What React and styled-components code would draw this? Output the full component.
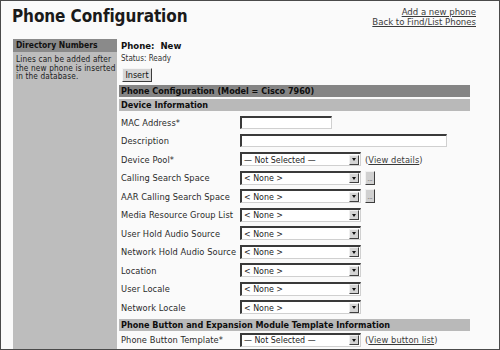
import React from "react";
import styled, { createGlobalStyle } from "styled-components";

const FONT = '"DejaVu Sans Condensed", "DejaVu Sans", Verdana, sans-serif';

const Global = createGlobalStyle`
  html, body { margin: 0; padding: 0; background: #fff; }
  body { font-family: ${FONT}; font-stretch: semi-condensed; color: #111; }
  * { box-sizing: border-box; }
`;

const Frame = styled.div`
  width: 500px;
  height: 350px;
  border: 1px solid #4a4a4a;
  background: #fafafa;
  display: flex;
  flex-direction: column;
  overflow: hidden;
`;

const Header = styled.div`
  height: 38px;
  display: flex;
  justify-content: space-between;
  align-items: flex-start;
  padding: 3px 23px 0 11px;
`;

const Title = styled.h1`
  margin: 0;
  font-size: 17px;
  font-weight: bold;
  font-stretch: semi-condensed;
  letter-spacing: -0.1px;
  line-height: 24px;
  color: #1a1a1a;
`;

const Links = styled.div`
  display: flex;
  flex-direction: column;
  align-items: flex-end;
  padding-top: 3px;
`;

const TopLink = styled.a`
  font-size: 9.5px;
  line-height: 10px;
  color: #3a3a3a;
  text-decoration: underline;
`;

const Body = styled.div`
  flex: 1;
  display: flex;
  gap: 2px;
  padding-left: 12px;
  min-height: 0;
`;

const Sidebar = styled.div`
  width: 104px;
  background: #bdbdbd;
  display: flex;
  flex-direction: column;
`;

const SideHead = styled.div`
  height: 13px;
  background: #8a8a8a;
  font-size: 8.5px;
  font-weight: bold;
  line-height: 13px;
  padding-left: 3px;
  color: #111;
`;

const SideText = styled.p`
  margin: 0;
  padding: 3px 0 0 3px;
  font-size: 8.2px;
  letter-spacing: 0.15px;
  line-height: 8.7px;
  white-space: nowrap;
  color: #1a1a1a;
`;

const Main = styled.div`
  width: 351px;
  display: flex;
  flex-direction: column;
`;

const PhoneLine = styled.div`
  margin-top: 1px;
  padding-left: 2px;
  font-size: 9.5px;
  font-weight: bold;
  line-height: 11px;
  white-space: pre;
`;

const Status = styled.div`
  margin-top: 3px;
  padding-left: 2px;
  font-size: 8px;
  line-height: 10px;
  color: #333;
`;

const InsertButton = styled.button`
  align-self: flex-start;
  margin: 4px 0 0 3px;
  height: 14px;
  width: 30px;
  padding: 0;
  font-family: ${FONT};
  font-stretch: semi-condensed;
  font-size: 9px;
  line-height: 10px;
  background: #d6d6d6;
  color: #111;
  border: 1px solid;
  border-color: #f4f4f4 #3c3c3c #3c3c3c #f4f4f4;
`;

const Bar = styled.div`
  height: 12px;
  margin-top: ${(p) => p.$mt || 2}px;
  background: ${(p) => (p.$dark ? "#858585" : "#b9b9b9")};
  font-size: 9px;
  font-weight: bold;
  line-height: 12px;
  padding-left: 2px;
  color: #0d0d0d;
  white-space: nowrap;
`;

const Rows = styled.div`
  margin-top: ${(p) => p.$mt || 0}px;
  display: flex;
  flex-direction: column;
`;

const Row = styled.div`
  height: 18.5px;
  display: grid;
  grid-template-columns: 121px 1fr;
  align-items: center;
`;

const Label = styled.div`
  padding-left: 2px;
  font-size: 9.2px;
  letter-spacing: 0.08px;
  color: #2a2a2a;
  white-space: nowrap;
`;

const Field = styled.div`
  display: flex;
  align-items: center;
  gap: 4px;
`;

const TextInput = styled.div`
  width: ${(p) => p.$w}px;
  height: 13px;
  background: #fff;
  border-style: solid;
  border-width: 2px 1px 1px 2px;
  border-color: #3a3a3a #d0d0d0 #d0d0d0 #3a3a3a;
`;

const Select = styled.div`
  width: 121px;
  height: 14px;
  background: #fff;
  border-style: solid;
  border-width: 2px 1px 1px 2px;
  border-color: #3a3a3a #d0d0d0 #d0d0d0 #3a3a3a;
  display: flex;
  align-items: center;
  justify-content: space-between;
`;

const SelectText = styled.span`
  font-size: 8.8px;
  line-height: 10px;
  padding-left: 2px;
  color: #222;
  white-space: nowrap;
`;

const Arrow = styled.span`
  width: 10px;
  height: 10px;
  margin-right: 1px;
  background: #d4d4d4;
  border: 1px solid;
  border-color: #f0f0f0 #404040 #404040 #f0f0f0;
  display: flex;
  align-items: center;
  justify-content: center;
  &::after {
    content: "";
    border-left: 2.5px solid transparent;
    border-right: 2.5px solid transparent;
    border-top: 3px solid #111;
  }
`;

const DotsButton = styled.span`
  width: 10px;
  height: 14px;
  background: #d0d0d0;
  border: 1px solid;
  border-color: #f0f0f0 #3c3c3c #3c3c3c #f0f0f0;
  font-size: 6px;
  line-height: 14px;
  text-align: center;
  color: #333;
  overflow: hidden;
`;

const ParenLink = styled.span`
  font-size: 9.2px;
  letter-spacing: 0.1px;
  color: #3a3a3a;
  a {
    color: #3a3a3a;
    text-decoration: underline;
  }
`;

const deviceRows = [
  { label: "MAC Address*", input: 92 },
  { label: "Description", input: 207 },
  { label: "Device Pool*", select: "\u2014 Not Selected \u2014", link: "View details" },
  { label: "Calling Search Space", select: "< None >", dots: true },
  { label: "AAR Calling Search Space", select: "< None >", dots: true },
  { label: "Media Resource Group List", select: "< None >" },
  { label: "User Hold Audio Source", select: "< None >" },
  { label: "Network Hold Audio Source", select: "< None >" },
  { label: "Location", select: "< None >" },
  { label: "User Locale", select: "< None >" },
  { label: "Network Locale", select: "< None >" },
];

const buttonRows = [
  { label: "Phone Button Template*", select: "\u2014 Not Selected \u2014", link: "View button list" },
];

function FormRow({ row }) {
  return (
    <Row>
      <Label>{row.label}</Label>
      <Field>
        {row.input ? (
          <TextInput $w={row.input} />
        ) : (
          <Select>
            <SelectText>{row.select}</SelectText>
            <Arrow />
          </Select>
        )}
        {row.dots && <DotsButton>...</DotsButton>}
        {row.link && (
          <ParenLink>
            (<a href="#">{row.link}</a>)
          </ParenLink>
        )}
      </Field>
    </Row>
  );
}

export default function App() {
  return (
    <>
      <Global />
      <Frame>
        <Header>
          <Title>Phone Configuration</Title>
          <Links>
            <TopLink href="#">Add a new phone</TopLink>
            <TopLink href="#">Back to Find/List Phones</TopLink>
          </Links>
        </Header>
        <Body>
          <Sidebar>
            <SideHead>Directory Numbers</SideHead>
            <SideText>
              Lines can be added after
              <br />
              the new phone is inserted
              <br />
              in the database.
            </SideText>
          </Sidebar>
          <Main>
            <PhoneLine>{"Phone:  New"}</PhoneLine>
            <Status>Status: Ready</Status>
            <InsertButton>Insert</InsertButton>
            <Bar $dark $mt={3}>Phone Configuration (Model = Cisco 7960)</Bar>
            <Bar>Device Information</Bar>
            <Rows $mt={2}>
              {deviceRows.map((r) => (
                <FormRow key={r.label} row={r} />
              ))}
            </Rows>
            <Bar>Phone Button and Expansion Module Template Information</Bar>
            <Rows>
              {buttonRows.map((r) => (
                <FormRow key={r.label} row={r} />
              ))}
            </Rows>
          </Main>
        </Body>
      </Frame>
    </>
  );
}
